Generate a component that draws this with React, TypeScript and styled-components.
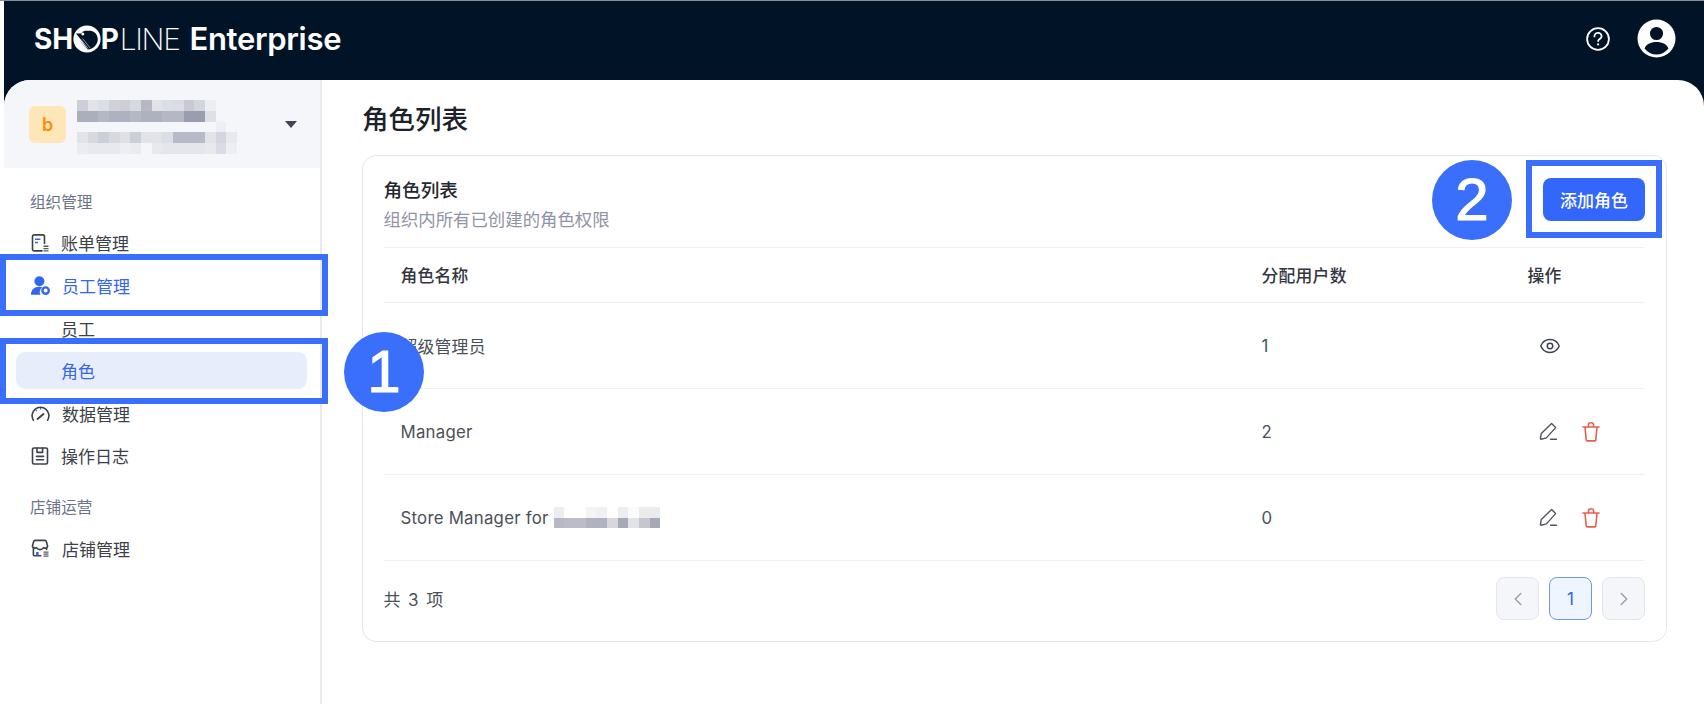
import React from "react";
import styled, { createGlobalStyle } from "styled-components";
import { ChevronLeft, ChevronRight, Eye } from "lucide-react";

const Global = createGlobalStyle`
  html, body { margin: 0; padding: 0; background: #fff; }
  body { font-family: Inter, "Noto Sans CJK SC", sans-serif; }
  * { box-sizing: border-box; }
`;

const BLUE = "#3a6ffb";
const ACTIVE = "#3366f0";

const Page = styled.div`
  position: relative;
  width: 1704px;
  height: 704px;
  overflow: hidden;
  padding-left: 4px;
  border-top: 1px solid #8b8f95;
  background: #fff;
`;
const Shell = styled.div`
  height: 703px;
  background: #001327;
  display: flex;
  flex-direction: column;
`;
const TopBar = styled.header`
  height: 79px;
  flex: none;
  display: flex;
  align-items: center;
  justify-content: space-between;
  padding: 0 28px 4px 30px;
`;
const Logo = styled.div`
  display: flex;
  align-items: center;
  color: #fff;
  font: 700 28px/1 Inter, sans-serif;
  letter-spacing: -0.2px;
`;
const LogoThin = styled.span`
  font-weight: 200;
  font-size: 30px;
  margin-left: 1px;
  letter-spacing: -1.4px;
`;
const LogoWord = styled.span`
  margin-left: 10px;
  font-size: 31px;
  font-weight: 600;
  letter-spacing: -0.3px;
`;
const TopActions = styled.div`
  display: flex;
  align-items: center;
  gap: 27px;
`;
const Panel = styled.div`
  flex: 1;
  min-height: 0;
  display: flex;
  background: #fff;
  border-radius: 26px 26px 0 0;
  overflow: hidden;
`;
const Sidebar = styled.aside`
  width: 318px;
  flex: none;
  border-right: 2px solid #e9eaee;
`;
const Switcher = styled.div`
  height: 88px;
  background: #f5f6fa;
  display: flex;
  align-items: center;
  padding: 0 23px 0 25px;
`;
const OrgBadge = styled.div`
  width: 37px;
  height: 37px;
  flex: none;
  margin-right: 11px;
  border-radius: 6px;
  background: #ffe6b8;
  color: #f79009;
  font: 600 18px/37px Inter, sans-serif;
  text-align: center;
`;
const OrgText = styled.div`
  flex: 1;
  margin-top: 6px;
  display: flex;
  flex-direction: column;
`;
const Mosaic = styled.div<{ $cols: number }>`
  display: inline-grid;
  grid-template-columns: repeat(${(p) => p.$cols}, 10.67px);
  grid-auto-rows: 10.67px;
`;
const Cell = styled.i<{ $a: number }>`
  display: block;
  background: rgba(110, 114, 138, ${(p) => p.$a});
`;
const Caret = styled.span`
  width: 0;
  height: 0;
  border-left: 6px solid transparent;
  border-right: 6px solid transparent;
  border-top: 7px solid #41454f;
`;
const Nav = styled.nav`
  padding: 25px 13px 0 12px;
  display: flex;
  flex-direction: column;
`;
const GroupLabel = styled.div<{ $later?: boolean }>`
  height: 20px;
  padding-left: 14px;
  margin-top: ${(p) => (p.$later ? "24px" : "0")};
  margin-bottom: 11.5px;
  font-size: 15.6px;
  line-height: 20px;
  color: #6a7389;
`;
const NavGroup = styled.div`
  display: flex;
  flex-direction: column;
  gap: 5.8px;
`;
const NavItem = styled.div<{ $active?: boolean; $selected?: boolean; $sub?: boolean }>`
  height: 36.8px;
  display: flex;
  align-items: center;
  gap: 12px;
  padding-left: ${(p) => (p.$sub ? "45px" : "15px")};
  border-radius: 9px;
  font-size: 17px;
  color: ${(p) => (p.$active || p.$selected ? ACTIVE : "#3c4049")};
  background: ${(p) => (p.$selected ? "#e8edfc" : "transparent")};
`;
const Main = styled.main`
  flex: 1;
  min-width: 0;
  padding: 20px 37px 0 40px;
`;
const PageTitle = styled.h1`
  margin: 0 0 17px;
  height: 38px;
  font-size: 26.5px;
  line-height: 38px;
  font-weight: 500;
  color: #1d2129;
`;
const Card = styled.section`
  height: 487px;
  border: 1.5px solid #e4e6ec;
  border-radius: 14px;
  padding: 0 21px 0 20.5px;
`;
const CardHead = styled.div`
  height: 92px;
  display: flex;
  align-items: center;
  justify-content: space-between;
  border-bottom: 1.5px solid #f0f1f4;
`;
const CardHeadText = styled.div`
  padding-top: 7px;
`;
const CardTitle = styled.div`
  font-size: 18.6px;
  line-height: 30px;
  font-weight: 500;
  color: #23262e;
`;
const CardSub = styled.div`
  font-size: 17.4px;
  line-height: 30px;
  color: #8f95a6;
`;
const AddButton = styled.button`
  width: 102px;
  height: 43px;
  margin-bottom: 5px;
  border: none;
  border-radius: 8px;
  background: #3366fb;
  color: #fff;
  font: 500 17px/1 "Noto Sans CJK SC", sans-serif;
  padding: 0;
`;
const Row = styled.div<{ $head?: boolean }>`
  height: ${(p) => (p.$head ? "55px" : "86px")};
  display: grid;
  grid-template-columns: 861px 266px 1fr;
  align-items: center;
  border-bottom: 1.5px solid #f0f1f4;
  font-size: 16.8px;
  font-weight: ${(p) => (p.$head ? 500 : 400)};
  color: ${(p) => (p.$head ? "#33363f" : "#4b4f5a")};
`;
const Td = styled.div`
  padding-left: 17px;
  display: flex;
  align-items: center;
  letter-spacing: 0.25px;
`;
const Actions = styled(Td)`
  gap: 24px;
  padding-left: 28px;
`;
const NameText = styled.span`
  margin-right: 5px;
`;
const Foot = styled.div`
  height: 80px;
  display: flex;
  align-items: center;
  justify-content: space-between;
  padding-bottom: 5px;
`;
const Total = styled.div`
  font-size: 17px;
  letter-spacing: 1.4px;
  color: #4b4f5a;
`;
const Pager = styled.div`
  display: flex;
  gap: 10px;
`;
const PageBtn = styled.div<{ $current?: boolean }>`
  width: 43px;
  height: 43px;
  display: flex;
  align-items: center;
  justify-content: center;
  border-radius: 8px;
  border: 1.5px solid ${(p) => (p.$current ? "#6f97e4" : "#e4e6ec")};
  background: ${(p) => (p.$current ? "#eef5ff" : "#f5f6fa")};
  color: ${(p) => (p.$current ? "#2f63e0" : "#9a9fac")};
  font-size: 17px;
`;
const FocusBox = styled.div<{ $x: number; $y: number; $w: number; $h: number }>`
  position: absolute;
  left: ${(p) => p.$x}px;
  top: ${(p) => p.$y}px;
  width: ${(p) => p.$w}px;
  height: ${(p) => p.$h}px;
  border: 6px solid ${BLUE};
`;
const Marker = styled.div<{ $x: number; $y: number }>`
  position: absolute;
  left: ${(p) => p.$x}px;
  top: ${(p) => p.$y}px;
  width: 80px;
  height: 80px;
  border-radius: 50%;
  background: ${BLUE};
  color: #fff;
  display: flex;
  align-items: center;
  justify-content: center;
  font: 400 60px/1 "Liberation Sans", sans-serif;
  -webkit-text-stroke: 1.2px #fff;
`;

const Block = ({ rows }: { rows: number[][] }) => (
  <Mosaic $cols={rows[0].length}>
    {rows.flat().map((a, i) => (
      <Cell key={i} $a={a} />
    ))}
  </Mosaic>
);

const orgName = [
  [0.3, 0.14, 0.18, 0.28, 0.3, 0.22, 0.48, 0.14, 0.18, 0.2, 0.34, 0.24, 0.06],
  [0.55, 0.55, 0.48, 0.52, 0.52, 0.48, 0.52, 0.52, 0.48, 0.48, 0.68, 0.68, 0.16],
];
const orgMail = [
  [0, 0, 0, 0, 0, 0, 0, 0, 0, 0, 0, 0, 0, 0.06, 0],
  [0.14, 0.22, 0.3, 0.22, 0.16, 0.3, 0.14, 0.14, 0.18, 0.45, 0.45, 0.45, 0.14, 0.24, 0.1],
  [0.07, 0.1, 0.1, 0.1, 0.06, 0.08, 0, 0.1, 0.12, 0.12, 0.12, 0.12, 0.1, 0.2, 0.06],
];
const storeName = [
  [0.12, 0, 0, 0.08, 0.1, 0, 0.12, 0.03, 0.14, 0.14],
  [0.5, 0.48, 0.48, 0.55, 0.55, 0.28, 0.62, 0.2, 0.4, 0.62],
];

const Line = { fill: "none", stroke: "currentColor", strokeWidth: 1.6, strokeLinecap: "round" as const, strokeLinejoin: "round" as const };

const BillIcon = () => (
  <svg width="18" height="18" viewBox="0 0 18 18">
    <path {...Line} d="M11 16.9H3.2A1.7 1.7 0 0 1 1.5 15.2V2.6A1.7 1.7 0 0 1 3.2.9h8.6a1.7 1.7 0 0 1 1.7 1.7v6.9" />
    <path d="M4 4.6h5.4V6H4zM4 7.8h3V9.2H4z" fill={ACTIVE} />
    <path d="M12.5 11.6h5v1.3h-5zM12.5 13.9h5v1.3h-5zM12.5 16.2h5v1.3h-5z" fill="#555a64" />
  </svg>
);
const StaffIcon = () => (
  <svg width="19" height="19" viewBox="0 0 19 19">
    <circle cx="8.4" cy="5.2" r="5" fill={ACTIVE} />
    <path d="M0 18.8c0-5 3.2-8 8.2-8 1.2 0 2.4.2 3.4.6A5 5 0 0 0 9.6 18.8z" fill={ACTIVE} />
    <circle cx="14.6" cy="14.6" r="3.2" fill="none" stroke={ACTIVE} strokeWidth="2.4" />
  </svg>
);
const GaugeIcon = () => (
  <svg width="19" height="18" viewBox="0 0 19 18">
    <path {...Line} d="M2.4 16.2A8.4 8.4 0 1 1 16.6 16.2" />
    <path {...Line} d="M6.5 15L12.5 10" strokeWidth="1.9" />
    <path d="M9 4h1.2v1.6H9zM4.4 6.6l.9-.8 1 1-.9.8z" fill={ACTIVE} />
  </svg>
);
const LogIcon = () => (
  <svg width="18" height="18" viewBox="0 0 18 18">
    <path {...Line} d="M3 1h12a1.5 1.5 0 0 1 1.5 1.5v13A1.5 1.5 0 0 1 15 17H3a1.5 1.5 0 0 1-1.5-1.5v-13A1.5 1.5 0 0 1 3 1z" />
    <path {...Line} d="M6 1.2v4.2h5.6V1.2M5.5 9.4h7M5.5 12.8h7" />
  </svg>
);
const StoreIcon = () => (
  <svg width="19" height="18" viewBox="0 0 19 18">
    <path {...Line} d="M1.4 7.2L2.6 2.6A1.6 1.6 0 0 1 4.2 1.4h9.6a1.6 1.6 0 0 1 1.6 1.2l1.2 4.6a2.5 2.5 0 0 1-4 1.4c-1 1.4-2.2 2-3.6 2s-2.6-.6-3.6-2a2.5 2.5 0 0 1-4-1.4z" />
    <path {...Line} d="M2.4 9.6v6.1a1 1 0 0 0 1 1h6.4M15.6 9.6v.9" />
    <path d="M5 13h2.6v3.5H5z" fill={ACTIVE} />
    <path d="M12.5 12.5h5v1.2h-5zM12.5 14.5h5v1.2h-5zM12.5 16.5h5v1.2h-5z" fill="#555a64" />
  </svg>
);
const PencilIcon = () => (
  <svg width="19" height="19" viewBox="0 0 19 19" color="#50545e">
    <path {...Line} strokeWidth="1.4" d="M12.6 1.6l4 4L7.4 15.9l-5.3 1.3a.6.6 0 0 1-.7-.7l.9-5z" />
    <path {...Line} strokeWidth="1.4" d="M11.5 17.2h6" />
  </svg>
);
const TrashIcon = () => (
  <svg width="18" height="20" viewBox="0 0 18 20" color="#e5604a">
    <path {...Line} strokeWidth="1.6" d="M1 5h16M3 5l1.2 13a1 1 0 0 0 1 .9h7.6a1 1 0 0 0 1-.9L15 5" />
    <path {...Line} strokeWidth="1.6" d="M6.4 4.8V3a2.6 2.2 0 0 1 5.2 0v1.8" />
  </svg>
);
const LogoMark = () => (
  <svg width="28" height="28" viewBox="0 0 28 28">
    <circle cx="14" cy="14" r="13.6" fill="#fff" />
    <path d="M3 8.5h5.2a6 6 0 0 1 3.6-2.8h5.4c4.6.6 7.6 4.2 7.6 8.5 0 5-4.4 10-10 10.2L7 13.6 3 8.5z" fill="#001327" />
    <circle cx="9.8" cy="9" r="1.5" fill="#fff" />
    <path d="M7.6 14l7.6 9.6M9.6 13.5l7.6 9.6M7.4 16.4l5.6 7.2" stroke="#aab4bf" strokeWidth="0.8" />
  </svg>
);
const HelpIcon = () => (
  <svg width="24" height="24" viewBox="0 0 24 24" fill="none" stroke="#fff" strokeWidth="1.8" strokeLinecap="round">
    <circle cx="12" cy="12" r="10.9" />
    <path d="M8.4 9.4A3.6 3.6 0 0 1 15.6 9.4c0 2.4-3.5 2.6-3.5 4.6" />
    <path d="M12.1 17.2v.3" strokeWidth="2.1" />
  </svg>
);
const AvatarIcon = () => (
  <svg width="39" height="39" viewBox="0 0 39 39">
    <circle cx="19.5" cy="19.5" r="19" fill="#fff" />
    <circle cx="19.5" cy="14.5" r="5.8" fill="#001327" stroke="#001327" strokeWidth="1.5" />
    <path d="M7.6 29.6C9 25.3 13.6 23 19.5 23s10.5 2.3 11.9 6.6a15 15 0 0 1-23.8 0z" fill="#001327" />
  </svg>
);

const App = () => (
  <Page>
    <Global />
    <Shell>
      <TopBar>
        <Logo>
          <span>SH</span>
          <LogoMark />
          <span>P</span>
          <LogoThin>LINE</LogoThin>
          <LogoWord>Enterprise</LogoWord>
        </Logo>
        <TopActions>
          <HelpIcon />
          <AvatarIcon />
        </TopActions>
      </TopBar>
      <Panel>
        <Sidebar>
          <Switcher>
            <OrgBadge>b</OrgBadge>
            <OrgText>
              <Block rows={orgName} />
              <Block rows={orgMail} />
            </OrgText>
            <Caret />
          </Switcher>
          <Nav>
            <GroupLabel>组织管理</GroupLabel>
            <NavGroup>
              <NavItem><BillIcon />账单管理</NavItem>
              <NavItem $active><StaffIcon />员工管理</NavItem>
              <NavItem $sub>员工</NavItem>
              <NavItem $sub $selected>角色</NavItem>
              <NavItem><GaugeIcon />数据管理</NavItem>
              <NavItem><LogIcon />操作日志</NavItem>
            </NavGroup>
            <GroupLabel $later>店铺运营</GroupLabel>
            <NavGroup>
              <NavItem><StoreIcon />店铺管理</NavItem>
            </NavGroup>
          </Nav>
        </Sidebar>
        <Main>
          <PageTitle>角色列表</PageTitle>
          <Card>
            <CardHead>
              <CardHeadText>
                <CardTitle>角色列表</CardTitle>
                <CardSub>组织内所有已创建的角色权限</CardSub>
              </CardHeadText>
              <AddButton>添加角色</AddButton>
            </CardHead>
            <Row $head>
              <Td>角色名称</Td>
              <Td>分配用户数</Td>
              <Td>操作</Td>
            </Row>
            <Row>
              <Td>超级管理员</Td>
              <Td>1</Td>
              <Actions><Eye size={22} strokeWidth={1.6} color="#3c4049" /></Actions>
            </Row>
            <Row>
              <Td>Manager</Td>
              <Td>2</Td>
              <Actions><PencilIcon /><TrashIcon /></Actions>
            </Row>
            <Row>
              <Td><NameText>Store Manager for</NameText><Block rows={storeName} /></Td>
              <Td>0</Td>
              <Actions><PencilIcon /><TrashIcon /></Actions>
            </Row>
            <Foot>
              <Total>共 3 项</Total>
              <Pager>
                <PageBtn><ChevronLeft size={22} strokeWidth={1.6} /></PageBtn>
                <PageBtn $current>1</PageBtn>
                <PageBtn><ChevronRight size={22} strokeWidth={1.6} /></PageBtn>
              </Pager>
            </Foot>
          </Card>
        </Main>
      </Panel>
    </Shell>
    <FocusBox $x={0} $y={253} $w={328} $h={62} />
    <FocusBox $x={0} $y={337} $w={328} $h={66} />
    <FocusBox $x={1526} $y={159} $w={136} $h={78} />
    <Marker $x={344} $y={331}>1</Marker>
    <Marker $x={1432} $y={159}>2</Marker>
  </Page>
);

export default App;
